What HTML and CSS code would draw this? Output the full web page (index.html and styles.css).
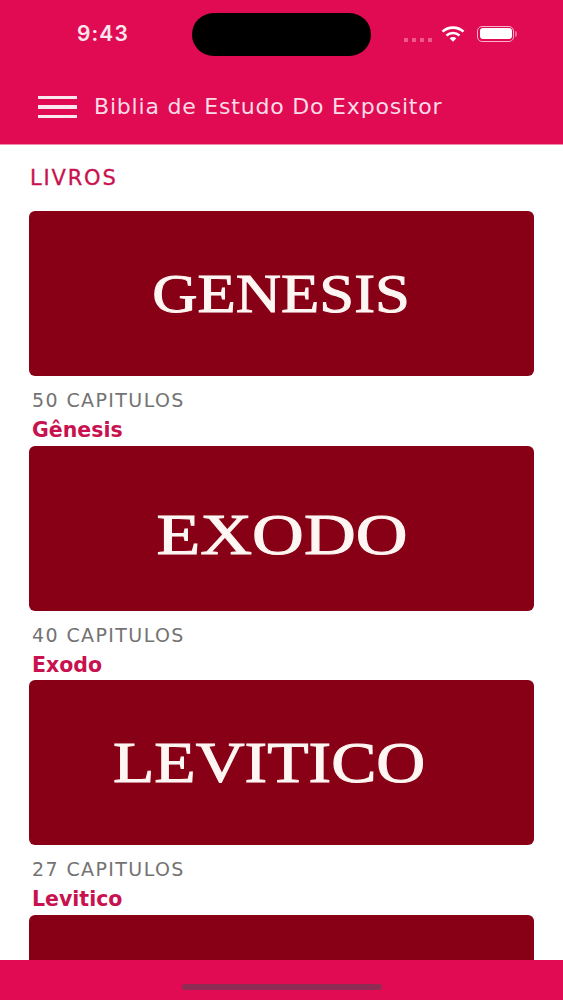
FILE: index.html
```html
<!DOCTYPE html>
<html lang="pt">
<head>
<meta charset="utf-8">
<title>Biblia de Estudo Do Expositor</title>
<link rel="stylesheet" href="styles.css">
</head>
<body>
<div class="page">
  <header class="header">
    <div class="status">
      <span class="time">9:43</span>
      <div class="island"></div>
      <div class="status-icons">
        <div class="dots"><i></i><i></i><i></i><i></i></div>
        <svg class="wifi" width="24" height="16" viewBox="0 0 24 16" aria-hidden="true">
          <path d="M1.5 5.6C7.4.3 16.6.3 22.5 5.6" fill="none" stroke="#fff" stroke-width="2.6"/>
          <path d="M5.5 9.4c3.7-3.2 9.3-3.2 13 0" fill="none" stroke="#fff" stroke-width="2.6"/>
          <path d="M8.6 12.2c2-1.5 4.8-1.5 6.8 0L12 15.8z" fill="#fff"/>
        </svg>
        <div class="battery"><div class="battery-fill"></div></div>
        <div class="battery-tip"></div>
      </div>
    </div>
    <div class="appbar">
      <div class="menu"><i></i><i></i><i></i></div>
      <h1 class="title">Biblia de Estudo Do Expositor</h1>
    </div>
  </header>
  <main class="content">
    <h2 class="section">LIVROS</h2>
    <article class="book">
      <div class="cover"><span class="cover-text genesis">GENESIS</span></div>
      <p class="chapters">50 CAPITULOS</p>
      <p class="name">Gênesis</p>
    </article>
    <article class="book">
      <div class="cover"><span class="cover-text exodo">EXODO</span></div>
      <p class="chapters">40 CAPITULOS</p>
      <p class="name">Exodo</p>
    </article>
    <article class="book">
      <div class="cover"><span class="cover-text levitico">LEVITICO</span></div>
      <p class="chapters">27 CAPITULOS</p>
      <p class="name">Levitico</p>
    </article>
    <article class="book">
      <div class="cover"></div>
    </article>
  </main>
  <footer class="footer"><div class="home"></div></footer>
</div>
</body>
</html>
```
FILE: styles.css
```css
* { box-sizing: border-box; }
html, body { margin: 0; padding: 0; background: #fff; }
.page {
  width: 563px; height: 1000px; overflow: hidden;
  display: flex; flex-direction: column;
  font-family: "DejaVu Sans", sans-serif;
}
.header {
  height: 145px; flex: none; background: #e00b53;
  border-bottom: 1px solid #f08aab;
  color: #fff;
}
.status { height: 70px; display: flex; padding: 13px 0 0 77px; }
.time {
  width: 115px; padding-top: 9px;
  font: 600 21px/24px "Inter", sans-serif; letter-spacing: 1.1px;
  color: #fbe6ed;
}
.island { width: 179px; height: 43px; background: #000; border-radius: 22px; flex: none; }
.status-icons { display: flex; align-items: center; height: 43px; margin-left: 33px; }
.dots { display: flex; gap: 4px; width: 31px; padding-top: 11px; }
.dots i { width: 4px; height: 4px; background: #f0588c; display: block; }
.wifi { margin-left: 6px; margin-top: -2px; }
.battery {
  width: 37px; height: 16px; margin-left: 12px; margin-top: -2px;
  border: 1.5px solid #f9b3ca; border-radius: 5px; padding: 1.5px;
}
.battery-fill { width: 100%; height: 100%; background: #fff; border-radius: 3px; }
.battery-tip { width: 2px; height: 6px; margin-left: 1px; margin-top: -2px; background: #f06a97; border-radius: 0 2px 2px 0; }
.appbar { display: flex; align-items: center; height: 74px; padding: 0 0 0 38px; }
.menu { width: 39px; display: flex; flex-direction: column; gap: 6px; }
.menu i { display: block; height: 3.5px; background: #fde8ef; }
.title {
  margin: 0 0 0 17px;
  font: 400 22px/28px "DejaVu Sans", sans-serif; letter-spacing: .8px;
  color: #fcdce7; white-space: nowrap;
}
.content { flex: 1; min-height: 0; overflow: hidden; padding: 0 29px; }
.section {
  margin: 0; height: 66px; padding: 20px 0 0 1px;
  font: 400 21px/26px "DejaVu Sans", sans-serif; letter-spacing: 1.8px;
  color: #c8124f;
  -webkit-text-stroke: .3px #c8124f;
}
.book { height: 234.67px; }
.cover {
  height: 165px; background: #880016; border-radius: 6px;
  display: flex; align-items: center; justify-content: center;
}
.cover-text {
  font-family: "Liberation Serif", serif; color: #fdf6f2; line-height: 1;
  white-space: nowrap; display: block;
  -webkit-text-stroke: 1px #fdf6f2;
}
.genesis { font-size: 55px; transform: scaleX(1.14); }
.exodo { font-size: 56px; margin-top: 13px; transform: scaleX(1.28); }
.levitico { font-size: 56px; margin-right: 25px; transform: scaleX(1.21); }
.chapters {
  margin: 13px 0 0 3px;
  font: 400 19px/22px "DejaVu Sans", sans-serif; letter-spacing: 1.4px;
  color: #737373;
}
.name {
  margin: 7px 0 0 3px;
  font: 700 20.5px/24px "DejaVu Sans", sans-serif;
  color: #c8124f;
}
.footer { height: 40px; flex: none; background: #e00b53; display: flex; justify-content: center; padding-top: 24px; }
.home { width: 200px; height: 6px; border-radius: 3px; background: #8f2c53; }
```
